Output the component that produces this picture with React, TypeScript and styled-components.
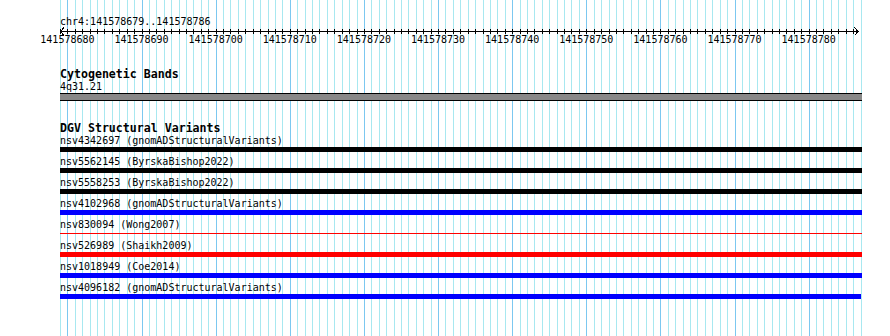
import styled, { createGlobalStyle } from "styled-components";

const BASE = 7.4125; // px per base
const START = 141578679;
const END = 141578786;

const variants = [
  { id: "nsv4342697", source: "gnomADStructuralVariants", color: "#000000" },
  { id: "nsv5562145", source: "ByrskaBishop2022", color: "#000000" },
  { id: "nsv5558253", source: "ByrskaBishop2022", color: "#000000" },
  { id: "nsv4102968", source: "gnomADStructuralVariants", color: "#0000ff" },
  { id: "nsv830094", source: "Wong2007", color: "#ff0000", thin: true },
  { id: "nsv526989", source: "Shaikh2009", color: "#ff0000" },
  { id: "nsv1018949", source: "Coe2014", color: "#0000ff" },
  { id: "nsv4096182", source: "gnomADStructuralVariants", color: "#0000ff", short: true },
];

const GlobalStyle = createGlobalStyle`
  body {
    margin: 0;
    background: #ffffff;
  }
`;

const Ruler = () => {
  const ticks = [];
  for (let i = 0; i <= END - START; i++) {
    const x = Math.round(i * BASE) + 0.5;
    ticks.push(<line key={i} x1={x} y1={1} x2={x} y2={6} stroke="#000" />);
  }
  return (
    <RulerSvg width={802} height={6} shapeRendering="crispEdges">
      <line x1={0} y1={3.5} x2={798} y2={3.5} stroke="#000" />
      {ticks}
      <polyline points="4,-0.5 0.5,3.5 4,7.5" fill="none" stroke="#000" />
      <polyline points="794.5,-0.5 798,3.5 794.5,7.5" fill="none" stroke="#000" />
    </RulerSvg>
  );
};

const App = () => {
  const labels = [];
  for (let n = 141578680; n <= 141578780; n += 10) labels.push(n);

  return (
    <>
      <GlobalStyle />
      <Canvas>
        <Location>
          chr4:{START}..{END}
        </Location>
        <Ruler />
        <ScaleLabels>
          {labels.map((n) => (
            <ScaleLabel key={n}>{n}</ScaleLabel>
          ))}
        </ScaleLabels>

        <Track $top={22}>
          <TrackTitle>Cytogenetic Bands</TrackTitle>
          <FeatureLabel>4q31.21</FeatureLabel>
          <Band />
        </Track>

        <Track $top={21}>
          <TrackTitle>DGV Structural Variants</TrackTitle>
          {variants.map((v) => (
            <Row key={v.id}>
              <FeatureLabel>
                {v.id} ({v.source})
              </FeatureLabel>
              <BarSlot>
                <FeatureBar $color={v.color} $thin={!!v.thin} $short={!!v.short} />
              </BarSlot>
            </Row>
          ))}
        </Track>
      </Canvas>
    </>
  );
};

export default App;

const Canvas = styled.div`
  margin-left: 60px;
  width: 802px;
  height: 336px;
  padding-top: 16px;
  box-sizing: border-box;
  display: flex;
  flex-direction: column;
  font-family: "DejaVu Sans Mono", "Liberation Mono", monospace;
  font-size: 10px;
  color: #000;
  background-image: repeating-linear-gradient(
      to right,
      transparent 0 7.4125px,
      #7cc8f0 7.4125px 8.4125px,
      transparent 8.4125px 74.125px
    ),
    repeating-linear-gradient(to right, #a8e8f0 0 1px, transparent 1px 7.4125px);
`;
const Location = styled.div`
  line-height: 12px;
  white-space: nowrap;
`;
const RulerSvg = styled.svg`
  display: block;
  overflow: visible;
`;
const ScaleLabels = styled.div`
  display: flex;
  margin-left: -29.65px;
  line-height: 12px;
`;
const ScaleLabel = styled.div`
  flex: 0 0 74.125px;
  text-align: center;
  white-space: nowrap;
`;
const Track = styled.div<{ $top: number }>`
  display: flex;
  flex-direction: column;
  margin-top: ${(p) => p.$top}px;
`;
const TrackTitle = styled.div`
  font-weight: bold;
  font-size: 11.6px;
  line-height: 13px;
  white-space: nowrap;
`;
const FeatureLabel = styled.div`
  line-height: 12px;
  white-space: nowrap;
`;
const Band = styled.div`
  height: 6px;
  width: 802px;
  background: #888888;
  border-top: 1px solid #000;
  border-bottom: 1px solid #000;
`;
const Row = styled.div`
  display: flex;
  flex-direction: column;
  padding-bottom: 4px;
`;
const BarSlot = styled.div`
  height: 5px;
  display: flex;
  align-items: center;
`;
const FeatureBar = styled.div<{ $color: string; $thin: boolean; $short: boolean }>`
  width: ${(p) => (p.$short ? 801 : 802)}px;
  height: ${(p) => (p.$thin ? 1 : 5)}px;
  background: ${(p) => p.$color};
`;
